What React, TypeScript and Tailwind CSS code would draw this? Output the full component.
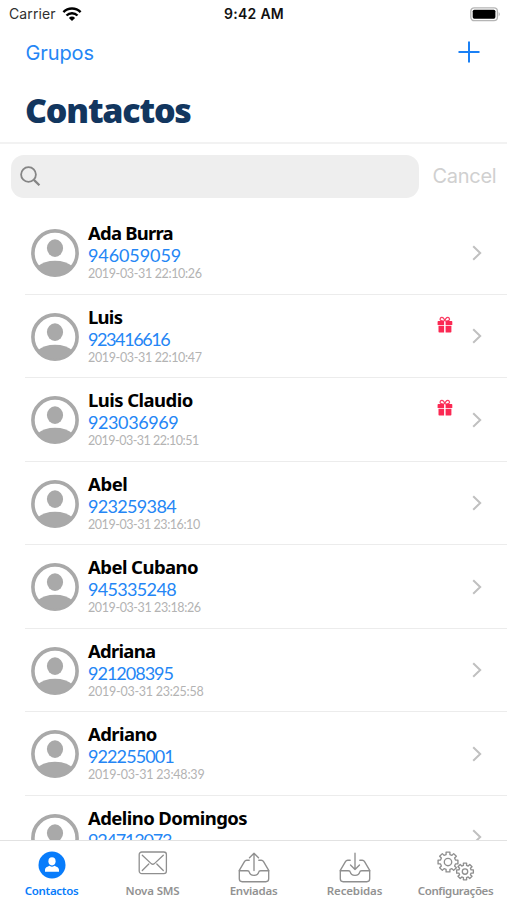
import React from "react";

type Contact = {
  name: string;
  phone: string;
  date?: string;
  gift?: boolean;
  nameClass: string;
  phoneClass: string;
  dateClass?: string;
};

const contacts: Contact[] = [
  { name: "Ada Burra", phone: "946059059", date: "2019-03-31 22:10:26", nameClass: "tracking-[-0.8px]", phoneClass: "tracking-[-0.1px]", dateClass: "tracking-[-0.35px]" },
  { name: "Luis", phone: "923416616", date: "2019-03-31 22:10:47", gift: true, nameClass: "tracking-[-0.75px]", phoneClass: "tracking-[-1.4px]", dateClass: "tracking-[-0.35px]" },
  { name: "Luis Claudio", phone: "923036969", date: "2019-03-31 22:10:51", gift: true, nameClass: "tracking-[-0.55px]", phoneClass: "tracking-[-0.4px]", dateClass: "tracking-[-0.5px]" },
  { name: "Abel", phone: "923259384", date: "2019-03-31 23:16:10", nameClass: "tracking-[-0.4px]", phoneClass: "tracking-[-0.67px]", dateClass: "tracking-[-0.45px]" },
  { name: "Abel Cubano", phone: "945335248", date: "2019-03-31 23:18:26", nameClass: "tracking-[-0.55px]", phoneClass: "tracking-[-0.67px]", dateClass: "tracking-[-0.4px]" },
  { name: "Adriana", phone: "921208395", date: "2019-03-31 23:25:58", nameClass: "tracking-[-0.75px]", phoneClass: "tracking-[-1px]", dateClass: "tracking-[-0.25px]" },
  { name: "Adriano", phone: "922255001", date: "2019-03-31 23:48:39", nameClass: "tracking-[-0.6px]", phoneClass: "tracking-[-0.9px]", dateClass: "tracking-[-0.2px]" },
  { name: "Adelino Domingos", phone: "924713073", nameClass: "tracking-[-0.58px]", phoneClass: "tracking-[-1.2px]" },
];

function WifiIcon() {
  return (
    <svg width="20" height="15" viewBox="0 0 20 15" fill="none" stroke="#000" strokeWidth="2.4">
      <path d="M1.4 5.2 A12 12 0 0 1 18.6 5.2" />
      <path d="M4.5 8.5 A7.7 7.7 0 0 1 15.5 8.5" />
      <path d="M10 14 L6.9 10.9 A4.4 4.4 0 0 1 13.1 10.9 Z" fill="#000" stroke="none" />
    </svg>
  );
}

function BatteryIcon() {
  return (
    <svg width="31" height="15" viewBox="0 0 31 15">
      <rect x="0.8" y="0.8" width="26.6" height="12.9" rx="3.4" fill="#fff" stroke="#b5b5b5" strokeWidth="1.3" />
      <rect x="2.7" y="2.7" width="22.7" height="9" rx="1.6" fill="#000" />
      <path d="M28.7 5 Q30.8 7.2 28.7 9.5 Z" fill="#b0b0b0" />
    </svg>
  );
}

function Avatar() {
  return (
    <svg className="shrink-0" width="48" height="48" viewBox="0 0 48 48">
      <circle cx="24" cy="24" r="22.1" fill="#fff" stroke="#a9a9a9" strokeWidth="3.6" />
      <ellipse cx="24" cy="19.1" rx="8.1" ry="8.8" fill="#a9a9a9" />
      <path d="M6.5 37.5 Q13 31.8 24 31.8 Q35 31.8 41.5 37.5 A22.5 22.5 0 0 1 6.5 37.5 Z" fill="#a9a9a9" />
    </svg>
  );
}

function GiftIcon() {
  return (
    <svg width="16" height="17" viewBox="0 0 16 17">
      <path d="M7.4 5 C3.4 5.1 2.5 3.8 3.4 2.2 C4.7 0.2 7.1 1.8 7.8 4.8 C8.5 1.8 10.9 0.2 12.2 2.2 C13.1 3.8 12.2 5.1 8.2 5" fill="none" stroke="#fb3b62" strokeWidth="1.2" />
      <path d="M1.3 5 H7.1 V8.9 H0.6 V5.7 Q0.6 5 1.3 5 Z M8.6 5 H14.6 Q15.3 5 15.3 5.7 V8.9 H8.6 Z M1.5 9.8 H7.1 V16.6 H2.3 Q1.5 16.6 1.5 15.8 Z M8.6 9.8 H14.4 V15.8 Q14.4 16.6 13.6 16.6 H8.6 Z" fill="#fb2953" />
    </svg>
  );
}

function Chevron() {
  return (
    <svg width="10" height="16" viewBox="0 0 10 16" fill="none" stroke="#c0c0c0" strokeWidth="2">
      <path d="M1.2 1.2 L8.2 8 L1.2 14.8" />
    </svg>
  );
}

function ContactRow({ contact }: { contact: Contact }) {
  return (
    <div className="ml-[25px] flex h-[83.5px] shrink-0 border-b-[1.5px] border-[#ececec] pl-[6px]">
      <div className="pt-[18px]">
        <Avatar />
      </div>
      <div className="ml-[9px] flex flex-1 flex-col whitespace-nowrap pt-[11px]">
        <span className={"font-['Noto_Sans',sans-serif] text-[18.5px] leading-[22px] font-bold text-black " + contact.nameClass}>{contact.name}</span>
        <span className={"font-['Lato',sans-serif] text-[18px] leading-[22px] text-[#2486f5] " + contact.phoneClass}>{contact.phone}</span>
        {contact.date && (
          <span className={"font-['Lato',sans-serif] text-[12.5px] leading-[15px] text-[#b3b3b3] " + (contact.dateClass ?? "")}>{contact.date}</span>
        )}
      </div>
      <div className="w-4 pt-[21px]">{contact.gift && <GiftIcon />}</div>
      <div className="ml-[19px] mr-[25px] pt-[33.5px]">
        <Chevron />
      </div>
    </div>
  );
}

function gearPath(cx: number, cy: number, outer: number, inner: number) {
  const point = (radius: number, angle: number) =>
    `${(cx + radius * Math.cos(angle)).toFixed(2)} ${(cy + radius * Math.sin(angle)).toFixed(2)}`;
  const parts: string[] = [];
  for (let i = 0; i < 8; i++) {
    const a = (i * Math.PI) / 4;
    parts.push(point(inner, a - 0.25), point(outer, a - 0.19), point(outer, a + 0.19), point(inner, a + 0.25));
  }
  return `M${parts.join(" L")} Z`;
}

function ContactsTabIcon() {
  return (
    <svg width="28" height="28" viewBox="0 0 28 28">
      <circle cx="14" cy="14" r="13.5" fill="#087cfb" />
      <ellipse cx="14" cy="10.3" rx="3.6" ry="4.1" fill="#fff" />
      <path d="M7 20.7 V19 C7 16.3 10.3 15.4 11.7 14.8 C13 16 15 16 16.3 14.8 C17.7 15.4 21 16.3 21 19 V20.7 Z" fill="#fff" />
    </svg>
  );
}

function MailTabIcon() {
  return (
    <svg width="30" height="24" viewBox="0 0 30 24" fill="none" stroke="#8f8f8f" strokeWidth="1.3" strokeLinecap="round" strokeLinejoin="round">
      <rect x="1.2" y="1" width="27.2" height="21.6" rx="2.6" />
      <path d="M4.3 4.2 L13.2 12.6 Q14.8 14 16.4 12.6 L25.3 4.2 M4.3 19.5 L10.8 13 M25.3 19.5 L18.8 13" />
    </svg>
  );
}

function TrayTabIcon({ up }: { up: boolean }) {
  return (
    <svg width="32" height="31" viewBox="0 0 32 31" fill="none" stroke="#8f8f8f" strokeWidth="1.35" strokeLinecap="round" strokeLinejoin="round">
      <path d="M11.2 8.2 H8.7 Q7.3 8.2 6.6 9.4 L1.3 18.4 V26.8 Q1.3 29.7 4.2 29.7 H27.8 Q30.7 29.7 30.7 26.8 V18.4 L25.4 9.4 Q24.7 8.2 23.3 8.2 H20.8" />
      <path d="M1.3 18.7 H9.3 Q11.2 18.7 11.3 20.2 Q11.9 23.3 16 23.3 Q20.1 23.3 20.7 20.2 Q20.8 18.7 22.7 18.7 H30.7" />
      <path d={up ? "M16 18.5 V1.2 M11.5 5.7 L16 1.2 L20.5 5.7" : "M16 1.2 V17.5 M11.5 13 L16 17.5 L20.5 13"} />
    </svg>
  );
}

function GearsTabIcon() {
  return (
    <svg width="38" height="30" viewBox="0 0 38 30" fill="none" stroke="#8f8f8f" strokeWidth="1.35" strokeLinejoin="round">
      <path d={gearPath(11, 11, 10.1, 7.7)} />
      <circle cx="11" cy="11" r="3.7" />
      <path d={gearPath(28, 20.5, 8.5, 6.3)} />
      <circle cx="28" cy="20.5" r="2.7" />
    </svg>
  );
}

const tabs = [
  { label: "Contactos", icon: <ContactsTabIcon />, pad: "pt-[10.5px]", text: "text-[#087cfb] tracking-[-0.3px]" },
  { label: "Nova SMS", icon: <MailTabIcon />, pad: "pt-[10px]", text: "text-[#929292] tracking-[-0.15px]" },
  { label: "Enviadas", icon: <TrayTabIcon up />, pad: "pt-[11px]", text: "text-[#929292] tracking-[-0.25px]" },
  { label: "Recebidas", icon: <TrayTabIcon up={false} />, pad: "pt-[11px]", text: "text-[#929292] tracking-[-0.15px]" },
  { label: "Configurações", icon: <GearsTabIcon />, pad: "pt-[10px]", text: "text-[#929292] tracking-[-0.4px]" },
];

export default function App() {
  return (
    <div className="flex h-[900px] w-[507px] flex-col overflow-hidden bg-white font-['Inter',sans-serif]">
      <div className="grid h-[28px] shrink-0 grid-cols-3 items-center pl-[9px] pr-[6px] text-[14px] leading-[28px]">
        <div className="flex items-center gap-[6px]">
          <span className="tracking-[0.1px] text-[#303030]">Carrier</span>
          <WifiIcon />
        </div>
        <span className="pr-[2px] text-center font-semibold tracking-[0.3px] text-[#111]">9:42 AM</span>
        <div className="flex justify-end">
          <BatteryIcon />
        </div>
      </div>

      <header className="h-[115.5px] shrink-0 border-b-2 border-[#f2f2f2]">
        <div className="flex h-[49px] items-center justify-between pl-[25.5px] pr-[27px]">
          <span className="text-[20px] leading-6 tracking-[-0.1px] text-[#2486f5]">Grupos</span>
          <svg className="-mt-px" width="22" height="22" viewBox="0 0 22 22" stroke="#1a80f5" strokeWidth="2">
            <path d="M11 0.5 V21.5 M0.5 11 H21.5" />
          </svg>
        </div>
        <h1 className="pl-[25px] font-['Noto_Sans',sans-serif] text-[34px] leading-[66px] font-black tracking-[-1.2px] text-[#12365f]">Contactos</h1>
      </header>

      <div className="flex h-[67.5px] shrink-0 items-start pl-[11px] pt-[11px]">
        <div className="flex h-[43.5px] w-[407.5px] items-center rounded-[13px] bg-[#eeeeee] pl-[9px]">
          <svg width="21" height="21" viewBox="0 0 21 21" fill="none" stroke="#858585" strokeWidth="1.8">
            <circle cx="8.5" cy="8.5" r="7.4" />
            <path d="M13.9 13.9 L19.4 19.3" strokeWidth="2.3" />
          </svg>
        </div>
        <span className="ml-[14px] text-[20px] leading-[43px] tracking-[-0.3px] text-[#d0d0d0]">Cancel</span>
      </div>

      <main className="flex min-h-0 flex-1 flex-col overflow-hidden">
        {contacts.map((contact) => (
          <ContactRow key={contact.phone} contact={contact} />
        ))}
      </main>

      <nav className="grid h-[60.5px] shrink-0 grid-cols-5 border-t-[1.5px] border-[#e2e2e2] px-px">
        {tabs.map((tab) => (
          <div key={tab.label} className="flex flex-col items-center">
            <div className={"flex h-[42px] items-start " + tab.pad}>{tab.icon}</div>
            <span className={"whitespace-nowrap font-['Noto_Sans',sans-serif] text-[11.5px] leading-[15px] font-semibold " + tab.text}>{tab.label}</span>
          </div>
        ))}
      </nav>
    </div>
  );
}
